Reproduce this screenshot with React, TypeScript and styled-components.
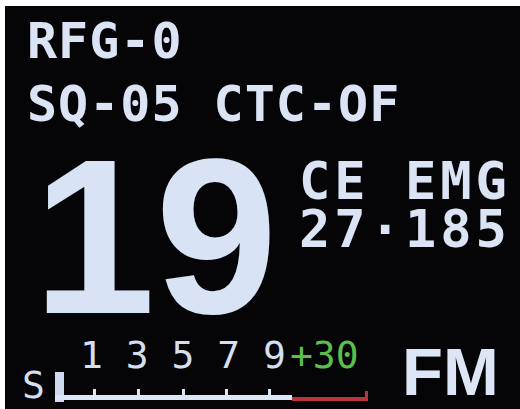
import { styled, createGlobalStyle } from "styled-components";

const GlobalStyle = createGlobalStyle`
  html, body {
    margin: 0;
    padding: 0;
    background: #ffffff;
  }
`;

const LCD_FONT = `"DejaVu Sans Mono", "Liberation Mono", monospace`;
const BOLD_FONT = `"Liberation Sans", Arial, sans-serif`;

// scale marks along the s-meter (x in svg coords)
const ticks = [38, 82, 127, 170, 213];

const App = () => {
  return (
    <Page>
      <GlobalStyle />
      <Screen>
        <Header>
          <LcdLine>RFG-0</LcdLine>
          <LcdLine>SQ-05 CTC-OF</LcdLine>
        </Header>
        <ChannelRow>
          <Channel>19</Channel>
          <Info>
            <InfoLine>CE EMG</InfoLine>
            <InfoLine>27·185</InfoLine>
          </Info>
        </ChannelRow>
        <BottomRow>
          <Meter>
            <Scale>
              1 3 5 7 9<Over>+30</Over>
            </Scale>
            <BarRow>
              <SLabel>S</SLabel>
              <svg width="320" height="33" viewBox="0 0 320 33">
                <rect x="0" y="2" width="9" height="30" fill="#cfdaf0" />
                <rect x="0" y="25" width="237" height="5" fill="#dde6f6" />
                {ticks.map((x) => (
                  <rect key={x} x={x} y="19" width="3" height="7" fill="#dde6f6" />
                ))}
                <rect x="237" y="27" width="76" height="4" fill="#b8343f" />
                <rect x="310" y="21" width="3" height="10" fill="#b8343f" />
              </svg>
            </BarRow>
          </Meter>
          <Mode>FM</Mode>
        </BottomRow>
      </Screen>
    </Page>
  );
};

export default App;

const Page = styled.div`
  width: 520px;
  height: 409px;
  padding: 6px 0 0 5px;
  box-sizing: border-box;
  background: #ffffff;
  overflow: hidden;
`;

const Screen = styled.div`
  width: 515px;
  height: 403px;
  background: #050507;
  display: flex;
  flex-direction: column;
  color: #dbe4f5;
  overflow: hidden;
`;

const Header = styled.div`
  display: flex;
  flex-direction: column;
  padding: 4px 0 0 22px;
`;

const LcdLine = styled.div`
  font-family: ${LCD_FONT};
  font-weight: 700;
  font-size: 50px;
  line-height: 63px;
  letter-spacing: 1px;
  white-space: pre;
`;

const ChannelRow = styled.div`
  display: flex;
  align-items: flex-start;
  margin-top: 13px;
`;

const Channel = styled.div`
  font-family: ${BOLD_FONT};
  font-weight: 700;
  font-size: 220px;
  line-height: 0.8;
  height: 176px;
  width: 285px;
  box-sizing: border-box;
  padding-left: 28px;
  letter-spacing: 0;
  color: #d8e3f6;
`;

const Info = styled.div`
  display: flex;
  flex-direction: column;
  margin: 8px 0 0 9px;
`;

const InfoLine = styled.div`
  font-family: ${LCD_FONT};
  font-weight: 700;
  font-size: 52px;
  line-height: 48px;
  letter-spacing: 4px;
  white-space: pre;
`;

const BottomRow = styled.div`
  display: flex;
  align-items: flex-start;
  margin-top: 15px;
  padding-left: 17px;
`;

const Meter = styled.div`
  display: flex;
  flex-direction: column;
  width: 375px;
`;

const Scale = styled.div`
  font-family: ${LCD_FONT};
  font-size: 38px;
  line-height: 30px;
  white-space: pre;
  padding-left: 58px;
  color: #d6dff0;
`;

const Over = styled.span`
  color: #5cbf4c;
  margin-left: 4px;
`;

const BarRow = styled.div`
  display: flex;
  align-items: flex-start;
`;

const SLabel = styled.div`
  font-family: ${LCD_FONT};
  font-size: 38px;
  line-height: 30px;
  width: 33px;
  color: #d6dff0;
`;

const Mode = styled.div`
  font-family: ${BOLD_FONT};
  font-weight: 700;
  font-size: 67px;
  line-height: 1;
  margin: -2px 0 0 5px;
  color: #dde6f6;
`;
